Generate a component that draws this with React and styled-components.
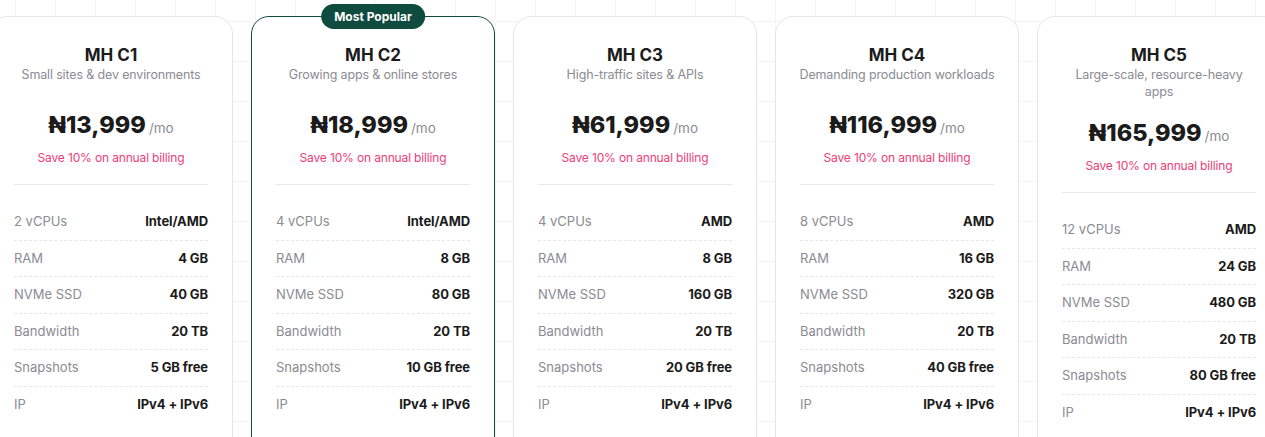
import React from "react";
import styled, { createGlobalStyle } from "styled-components";

const Global = createGlobalStyle`
  html, body { margin: 0; padding: 0; }
  body {
    background-color: #ffffff;
    background-image:
      linear-gradient(to right, #f4f4f5 1px, transparent 1px),
      linear-gradient(to bottom, #f4f4f5 1px, transparent 1px);
    background-size: 40px 40px;
    background-position: 15px 21px;
    font-family: Inter, "Noto Sans", sans-serif;
    color: #1b1b1b;
    overflow: hidden;
    height: 437px;
  }
`;

const Row = styled.div`
  display: flex;
  gap: 18px;
  margin-left: -11px;
  padding-top: 16px;
`;

const Card = styled.div`
  position: relative;
  flex: none;
  width: 244px;
  box-sizing: border-box;
  background: #fff;
  border: 1px solid ${(p) => (p.$popular ? "#0f4c3f" : "#e7e7ea")};
  border-radius: 18px;
  padding: 27px 24px 40px;
`;

const Badge = styled.div`
  position: absolute;
  top: -13px;
  left: 50%;
  transform: translateX(-50%);
  height: 25px;
  padding: 0 13px;
  display: flex;
  align-items: center;
  border-radius: 999px;
  background: #0f4c3f;
  color: #fff;
  font-size: 12px;
  font-weight: 700;
  white-space: nowrap;
`;

const Header = styled.div`
  text-align: center;
`;

const Title = styled.div`
  font-size: 17px;
  line-height: 22px;
  font-weight: 700;
  color: #1b1b1b;
`;

const Subtitle = styled.div`
  font-size: 12.5px;
  letter-spacing: -0.15px;
  line-height: 17px;
  color: #8b8b92;
  min-height: 26px;
  margin: 0 -5px;
  white-space: pre-line;
`;

const PriceLine = styled.div`
  margin-top: 17px;
  display: flex;
  justify-content: center;
  align-items: baseline;
  line-height: 32px;
`;

const Amount = styled.span`
  font-size: 23.5px;
  font-weight: 800;
  color: #1b1b1b;
`;

const Per = styled.span`
  font-size: 13.5px;
  color: #8b8b92;
  margin-left: 3px;
`;

const Save = styled.div`
  margin-top: 5px;
  font-size: 12px;
  letter-spacing: -0.15px;
  line-height: 17px;
  color: #ec3d77;
`;

const Divider = styled.hr`
  border: none;
  border-top: 1px solid #e8e8ec;
  margin: 18px 0 19px;
`;

const Specs = styled.div`
  display: flex;
  flex-direction: column;
`;

const Spec = styled.div`
  display: flex;
  justify-content: space-between;
  align-items: center;
  padding: 10px 0;
  line-height: 15.5px;
  font-size: 13px;
  & + & {
    border-top: 1px dashed #e6e6ea;
  }
`;

const Label = styled.span`
  color: #8b8b92;
`;

const Value = styled.span`
  font-weight: 700;
  color: #1b1b1b;
  letter-spacing: -0.1px;
`;

const plans = [
  { name: "MH C1", sub: "Small sites & dev environments", price: "₦13,999", specs: ["2 vCPUs", "Intel/AMD", "4 GB", "40 GB", "20 TB", "5 GB free"] },
  { name: "MH C2", sub: "Growing apps & online stores", price: "₦18,999", popular: true, specs: ["4 vCPUs", "Intel/AMD", "8 GB", "80 GB", "20 TB", "10 GB free"] },
  { name: "MH C3", sub: "High-traffic sites & APIs", price: "₦61,999", specs: ["4 vCPUs", "AMD", "8 GB", "160 GB", "20 TB", "20 GB free"] },
  { name: "MH C4", sub: "Demanding production workloads", price: "₦116,999", specs: ["8 vCPUs", "AMD", "16 GB", "320 GB", "20 TB", "40 GB free"] },
  { name: "MH C5", sub: "Large-scale, resource-heavy\napps", price: "₦165,999", specs: ["12 vCPUs", "AMD", "24 GB", "480 GB", "20 TB", "80 GB free"] },
];

export default function App() {
  return (
    <>
      <Global />
      <Row>
        {plans.map((p) => (
          <Card key={p.name} $popular={p.popular}>
            {p.popular && <Badge>Most Popular</Badge>}
            <Header>
              <Title>{p.name}</Title>
              <Subtitle>{p.sub}</Subtitle>
              <PriceLine>
                <Amount>{p.price}</Amount>
                <Per>/mo</Per>
              </PriceLine>
              <Save>Save 10% on annual billing</Save>
            </Header>
            <Divider />
            <Specs>
              <Spec><Label>{p.specs[0]}</Label><Value>{p.specs[1]}</Value></Spec>
              <Spec><Label>RAM</Label><Value>{p.specs[2]}</Value></Spec>
              <Spec><Label>NVMe SSD</Label><Value>{p.specs[3]}</Value></Spec>
              <Spec><Label>Bandwidth</Label><Value>{p.specs[4]}</Value></Spec>
              <Spec><Label>Snapshots</Label><Value>{p.specs[5]}</Value></Spec>
              <Spec><Label>IP</Label><Value>IPv4 + IPv6</Value></Spec>
            </Specs>
          </Card>
        ))}
      </Row>
    </>
  );
}
